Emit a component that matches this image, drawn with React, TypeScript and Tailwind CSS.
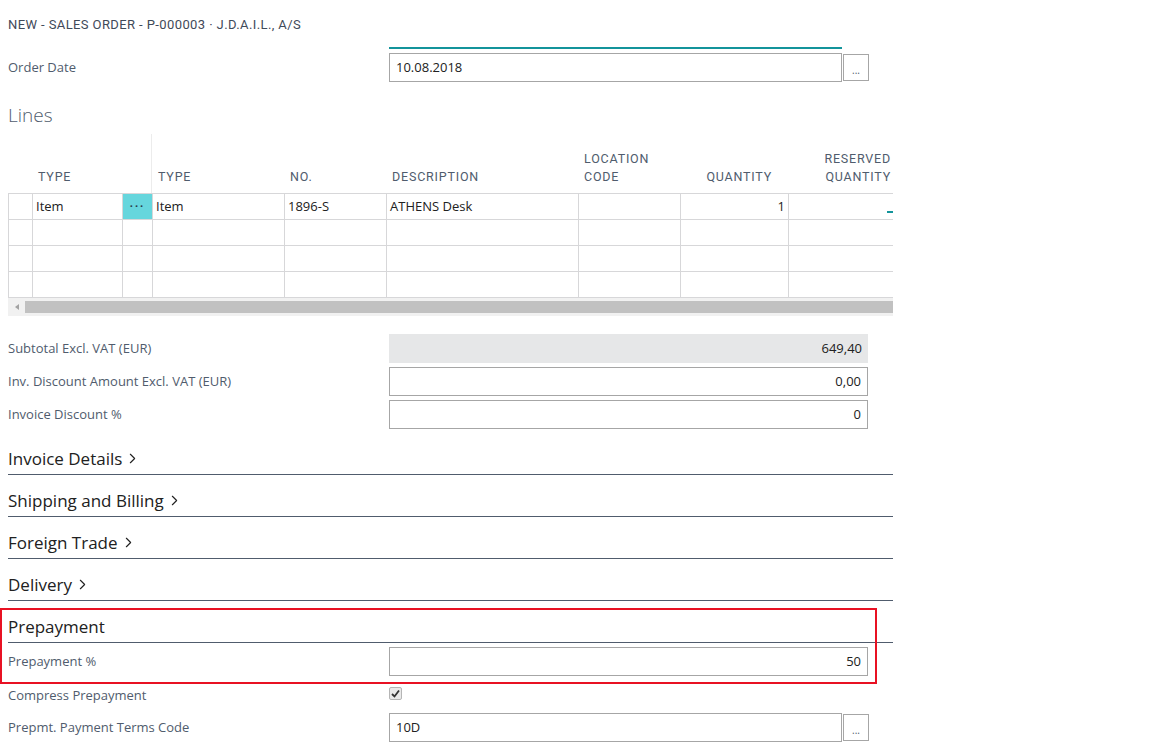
import { ChevronRight } from "lucide-react";

const label = "text-[13px] text-[#505c6d]";
const value = "text-[13px] text-[#212121]";
const dinFont = { fontFamily: "Roboto, 'Liberation Sans', sans-serif" };

const columns = [
  { title: ["", ""], width: "w-[24px]", align: "left" },
  { title: ["", "TYPE"], width: "w-[90px]", align: "left" },
  { title: ["", ""], width: "w-[30px]", align: "left" },
  { title: ["", "TYPE"], width: "w-[132px]", align: "left" },
  { title: ["", "NO."], width: "w-[102px]", align: "left" },
  { title: ["", "DESCRIPTION"], width: "w-[192px]", align: "left" },
  { title: ["LOCATION", "CODE"], width: "w-[102px]", align: "left" },
  { title: ["", "QUANTITY"], width: "w-[108px]", align: "right" },
  { title: ["RESERVED", "QUANTITY"], width: "w-[105px]", align: "right" },
];

const sections = ["Invoice Details", "Shipping and Billing", "Foreign Trade", "Delivery"];

function FieldRow({ name, children, className }: { name: string; children: React.ReactNode; className?: string }) {
  return (
    <div className={"flex items-center " + (className ?? "")}>
      <div className={"w-[381px] " + label}>{name}</div>
      {children}
    </div>
  );
}

function TextBox({ text, right, withButton }: { text: string; right?: boolean; withButton?: boolean }) {
  return (
    <div className="flex items-center">
      <div
        className={
          "h-[29px] border border-[#a6a6a6] bg-white flex items-center px-[6px] " +
          (withButton ? "w-[453px]" : "w-[479px] justify-end") +
          " " +
          value
        }
      >
        {right ? <span className="ml-auto">{text}</span> : text}
      </div>
      {withButton && (
        <div className="ml-[1px] h-[27px] w-[26px] border border-[#a6a6a6] bg-white flex items-end justify-center pb-[5px] text-[10px] leading-none text-[#505c6d]">
          ...
        </div>
      )}
    </div>
  );
}

function headerPad(i: number, align: string) {
  if (i === 8) return " items-end pr-[2px]";
  if (align === "right") return " items-end pr-[16px]";
  return " pl-[6px]";
}

function Lines() {
  const rows = [
    ["", "Item", "dots", "Item", "1896-S", "ATHENS Desk", "", "1", "link"],
    ["", "", "", "", "", "", "", "", ""],
    ["", "", "", "", "", "", "", "", ""],
    ["", "", "", "", "", "", "", "", ""],
  ];
  return (
    <div className="w-[885px] overflow-hidden">
      <div className="flex h-[65px] pt-[6px] text-[12.5px] tracking-[0.8px] text-[#505c6d]" style={dinFont}>
        {columns.map((c, i) => (
          <div
            key={i}
            className={
              "shrink-0 flex flex-col justify-end pb-[7px] leading-[18px] " +
              c.width +
              (i === 2 ? " border-r border-[#ececec]" : "") +
              headerPad(i, c.align)
            }
          >
            <span>{c.title[0]}</span>
            <span>{c.title[1]}</span>
          </div>
        ))}
      </div>
      <div className="border-t border-l border-[#d7d7d9]">
        {rows.map((r, ri) => (
          <div key={ri} className="flex h-[26px] border-b border-[#d7d7d9]">
            {r.map((cell, ci) => (
              <div
                key={ci}
                className={
                  "shrink-0 flex items-center text-[13px] text-[#212121] " +
                  columns[ci].width +
                  (ci < 8 ? " border-r border-[#d7d7d9]" : "") +
                  (cell === "dots" ? " bg-[#66d6dd] justify-center" : " px-[3px]") +
                  (ci === 7 ? " justify-end" : "")
                }
              >
                {cell === "dots" ? (
                  <span className="text-[11px] font-bold tracking-[2px] text-[#2b3a4a]">···</span>
                ) : cell === "link" ? (
                  <span className="ml-auto mr-[-3px] mt-[10px] h-[2px] w-[7px] bg-[#13949b]" />
                ) : (
                  cell
                )}
              </div>
            ))}
          </div>
        ))}
      </div>
      <div className="flex h-[18px] items-center bg-[#f1f1f1]">
        <div className="w-[17px] flex justify-center">
          <span className="block h-0 w-0 border-y-[3px] border-r-[4px] border-y-transparent border-r-[#a3a3a3]" />
        </div>
        <div className="flex-1 h-[12px] bg-[#c1c1c1]" />
      </div>
    </div>
  );
}

export default function App() {
  return (
    <div className="min-h-[748px] w-[1152px] bg-white pl-[8px]" style={{ fontFamily: "'Open Sans', 'Noto Sans', sans-serif" }}>
      <div className="pt-[17px] h-[47px] text-[13px] tracking-[0.4px] text-[#3f4a59] leading-[15px]" style={dinFont}>
        NEW - SALES ORDER - P-000003 · J.D.A.I.L., A/S
      </div>
      <div className="ml-[381px] w-[453px] h-[2px] bg-[#13949b]" />
      <FieldRow name="Order Date" className="mt-[4px]">
        <TextBox text="10.08.2018" withButton />
      </FieldRow>
      <div className="mt-[20px] text-[19px] font-light text-[#505c6d] leading-[26px]">Lines</div>
      <Lines />
      <div className="mt-[18px] flex flex-col gap-[4px]">
        <FieldRow name="Subtotal Excl. VAT (EUR)">
          <div className={"h-[29px] w-[479px] bg-[#e6e7e8] flex items-center justify-end px-[6px] " + value}>649,40</div>
        </FieldRow>
        <FieldRow name="Inv. Discount Amount Excl. VAT (EUR)">
          <TextBox text="0,00" right />
        </FieldRow>
        <FieldRow name="Invoice Discount %">
          <TextBox text="0" right />
        </FieldRow>
      </div>
      <div className="w-[885px]">
        {sections.map((s) => (
          <div key={s} className="h-[42px] border-b border-[#505c6d] flex items-end pb-[4px] gap-[2px] text-[17px] leading-[22px] text-[#212121] first:h-[46px]">
            <span>{s}</span>
            <ChevronRight size={17} strokeWidth={1.6} className="mb-[3px]" />
          </div>
        ))}
      </div>
      <div className="relative w-[885px]">
        <div className="pointer-events-none absolute left-[-8px] top-[7px] h-[76px] w-[877px] border-2 border-[#e81123]" />
        <div className="h-[42px] border-b border-[#505c6d] flex items-end pb-[4px] text-[17px] leading-[22px] text-[#212121]">Prepayment</div>
        <FieldRow name="Prepayment %" className="mt-[4px]">
          <TextBox text="50" right />
        </FieldRow>
        <div className="mt-[11px] flex h-[13px] items-center">
          <div className={"w-[381px] pt-[4px] " + label}>Compress Prepayment</div>
          <div className="h-[13px] w-[13px] rounded-[2px] border border-[#b5b5b5] bg-[#e9e9e9] flex items-center justify-center">
            <svg width="9" height="9" viewBox="0 0 9 9">
              <path d="M1 5 L3.5 7.5 L8 1.5" stroke="#333" strokeWidth="1.8" fill="none" />
            </svg>
          </div>
        </div>
        <FieldRow name="Prepmt. Payment Terms Code" className="mt-[13px]">
          <TextBox text="10D" withButton />
        </FieldRow>
      </div>
    </div>
  );
}
